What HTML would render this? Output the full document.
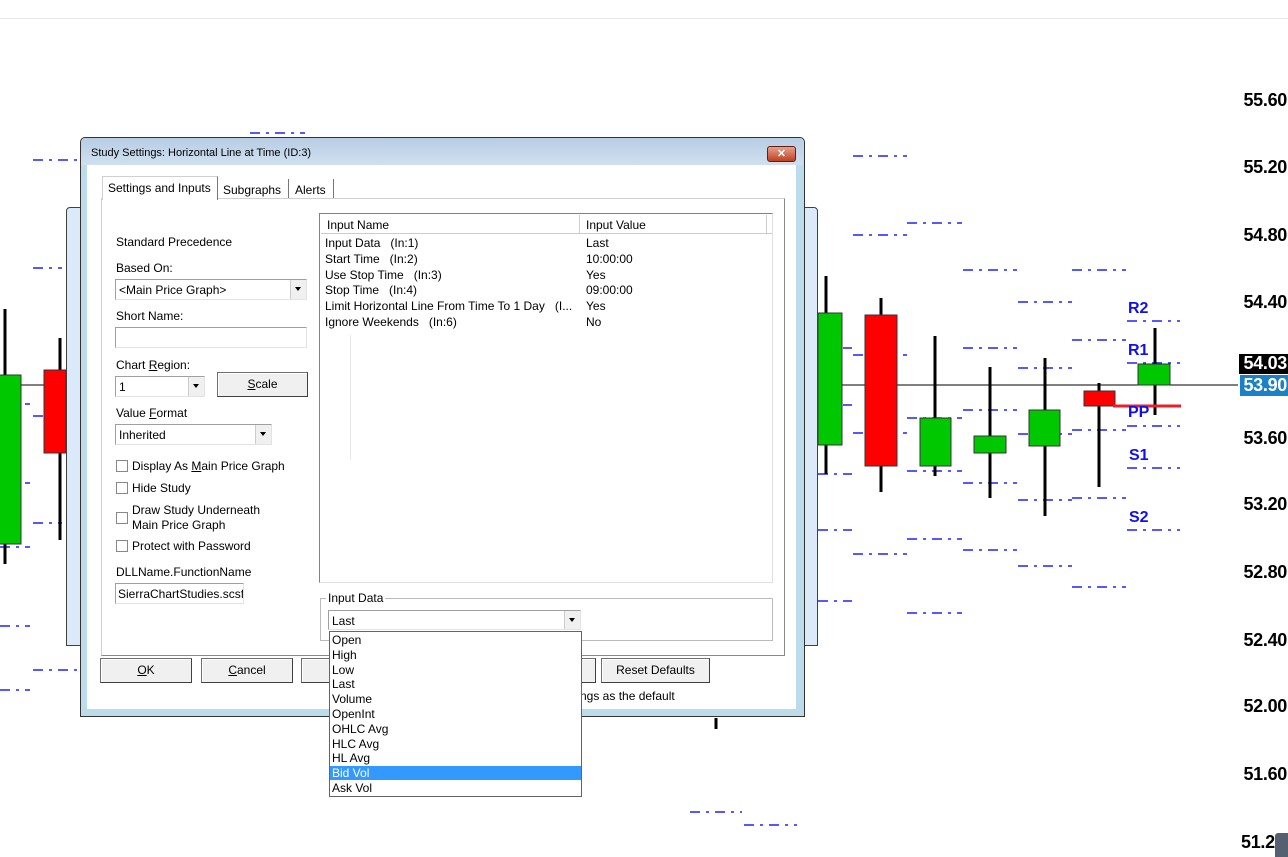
<!DOCTYPE html>
<html><head><meta charset="utf-8"><style>
body{margin:0;width:1288px;height:857px;overflow:hidden;background:#fff;font-family:"Liberation Sans",sans-serif;font-size:12px;color:#000;position:relative}
.a{position:absolute}
.lab{position:absolute;right:1px;font-weight:bold;font-size:18px;font-family:"Liberation Sans",sans-serif;letter-spacing:-0.3px}
.pv{position:absolute;font-weight:bold;font-size:16px;color:#1010ee;font-family:"Liberation Sans",sans-serif}
.t{position:absolute;white-space:nowrap}
.box{position:absolute;background:#fff;border:1px solid #a0a0a0;border-right-color:#e3e3e3;border-bottom-color:#e3e3e3}
.dd{position:absolute;right:0;top:0;bottom:0;width:15px;background:#f0f0f0;border-left:1px solid #ccc}
.dd:after{content:"";position:absolute;left:4px;top:7px;border:3px solid transparent;border-top:4px solid #000}
.btn{position:absolute;background:#f0f0f0;border:1px solid #707070;border-right-color:#404040;border-bottom-color:#404040;box-shadow:inset 1px 1px #fff;text-align:center;line-height:23px;height:23px}
.cb{position:absolute;width:10px;height:10px;border:1px solid #888;background:#fff}
</style></head><body>
<div class="a" style="left:0;top:18px;width:1288px;height:1px;background:#e8e8e8"></div>
<svg class="a" style="left:0;top:0" width="1288" height="857">
<g stroke="#2020ff" stroke-width="1.5" stroke-dasharray="10,6,3,6">
<line x1="250" y1="133" x2="305" y2="133"/><line x1="33" y1="160" x2="80" y2="160"/>
<line x1="853" y1="156" x2="907" y2="156"/><line x1="907" y1="223" x2="962" y2="223"/>
<line x1="853" y1="235" x2="907" y2="235"/><line x1="963" y1="270" x2="1017" y2="270"/>
<line x1="1072" y1="270" x2="1126" y2="270"/><line x1="33" y1="268" x2="62" y2="268"/>
<line x1="1018" y1="302" x2="1072" y2="302"/><line x1="1072" y1="340" x2="1126" y2="340"/>
<line x1="818" y1="348" x2="852" y2="348"/><line x1="853" y1="355" x2="907" y2="355"/>
<line x1="963" y1="348" x2="1017" y2="348"/><line x1="1018" y1="368" x2="1072" y2="368"/>
<line x1="0" y1="404" x2="30" y2="404"/><line x1="33" y1="416" x2="62" y2="416"/>
<line x1="907" y1="418" x2="962" y2="418"/><line x1="963" y1="410" x2="1017" y2="410"/>
<line x1="818" y1="405" x2="852" y2="405"/><line x1="853" y1="433" x2="907" y2="433"/>
<line x1="1072" y1="430" x2="1126" y2="430"/><line x1="1018" y1="434" x2="1072" y2="434"/>
<line x1="963" y1="483" x2="1017" y2="483"/><line x1="818" y1="474" x2="852" y2="474"/>
<line x1="907" y1="471" x2="962" y2="471"/><line x1="0" y1="483" x2="30" y2="483"/>
<line x1="33" y1="523" x2="62" y2="523"/><line x1="0" y1="547" x2="30" y2="547"/>
<line x1="1018" y1="500" x2="1072" y2="500"/><line x1="1072" y1="498" x2="1126" y2="498"/>
<line x1="818" y1="530" x2="852" y2="530"/><line x1="853" y1="554" x2="907" y2="554"/>
<line x1="907" y1="539" x2="962" y2="539"/><line x1="963" y1="550" x2="1017" y2="550"/>
<line x1="1018" y1="566" x2="1072" y2="566"/><line x1="1072" y1="587" x2="1126" y2="587"/>
<line x1="818" y1="601" x2="852" y2="601"/><line x1="907" y1="613" x2="962" y2="613"/>
<line x1="0" y1="626" x2="30" y2="626"/><line x1="33" y1="670" x2="80" y2="670"/>
<line x1="0" y1="690" x2="30" y2="690"/><line x1="690" y1="812" x2="742" y2="812"/>
<line x1="744" y1="825" x2="797" y2="825"/>
<line x1="1127" y1="321" x2="1180" y2="321"/><line x1="1127" y1="363" x2="1180" y2="363"/>
<line x1="1127" y1="426" x2="1180" y2="426"/><line x1="1127" y1="468" x2="1180" y2="468"/>
<line x1="1127" y1="530" x2="1180" y2="530"/>
</g>
<line x1="0" y1="385" x2="1238" y2="385" stroke="#000" stroke-width="1"/>
<g stroke="#000" stroke-width="3">
<line x1="5" y1="309" x2="5" y2="564"/><line x1="60" y1="338" x2="60" y2="540"/>
<line x1="826" y1="276" x2="826" y2="474"/><line x1="881" y1="298" x2="881" y2="492"/>
<line x1="935" y1="336" x2="935" y2="476"/><line x1="990" y1="367" x2="990" y2="498"/>
<line x1="1045" y1="358" x2="1045" y2="516"/><line x1="1099" y1="383" x2="1099" y2="487"/>
<line x1="1155" y1="328" x2="1155" y2="415"/><line x1="716" y1="718" x2="716" y2="729"/>
</g>
<g stroke="#333" stroke-width="1">
<rect x="-1" y="375" width="22" height="169" fill="#00c800"/>
<rect x="44" y="370" width="22" height="83" fill="#ff0000"/>
<rect x="818" y="313" width="24" height="132" fill="#00c800"/>
<rect x="865" y="315" width="32" height="151" fill="#ff0000"/>
<rect x="920" y="418" width="31" height="48" fill="#00c800"/>
<rect x="974" y="436" width="32" height="17" fill="#00c800"/>
<rect x="1029" y="410" width="31" height="36" fill="#00c800"/>
<rect x="1084" y="391" width="31" height="15" fill="#ff0000"/>
<rect x="1138" y="364" width="32" height="21" fill="#00c800"/>
</g>
<line x1="1113" y1="406" x2="1181" y2="406" stroke="#e8202a" stroke-width="3"/>
</svg>
<div class="pv" style="left:1128px;top:300px">R2</div>
<div class="pv" style="left:1128px;top:342px">R1</div>
<div class="pv" style="left:1128px;top:404px">PP</div>
<div class="pv" style="left:1129px;top:447px">S1</div>
<div class="pv" style="left:1129px;top:509px">S2</div>
<div class="lab" style="top:90px">55.60</div>
<div class="lab" style="top:157px">55.20</div>
<div class="lab" style="top:225px">54.80</div>
<div class="lab" style="top:292px">54.40</div>
<div class="a" style="left:1239px;top:354px;width:49px;height:20px;background:#000"></div>
<div class="lab" style="top:353px;color:#fff">54.03</div>
<div class="a" style="left:1240px;top:375px;width:48px;height:21px;background:#1a80c8"></div>
<div class="lab" style="top:375px;color:#fff">53.90</div>
<div class="lab" style="top:428px">53.60</div>
<div class="lab" style="top:494px">53.20</div>
<div class="lab" style="top:562px">52.80</div>
<div class="lab" style="top:630px">52.40</div>
<div class="lab" style="top:696px">52.00</div>
<div class="lab" style="top:764px">51.60</div>
<div class="lab" style="top:832px;right:auto;left:1241px">51.2</div>
<div class="a" style="left:1275px;top:833px;width:13px;height:24px;background:#556070;border-radius:3px 0 0 0"></div>

<div class="a" style="left:66px;top:207px;width:750px;height:437px;border:1px solid #404040;background:#dbeaf8;border-radius:4px 4px 0 0"></div>
<div class="a" style="left:80px;top:137px;width:723px;height:578px;border:1px solid #333;border-radius:5px 5px 0 0;background:#bcdcec"></div>
<div class="a" style="left:81px;top:138px;width:722px;height:27px;background:linear-gradient(#b8cde4,#cfe0f0);border-radius:5px 5px 0 0"></div>
<div class="t" style="left:91px;top:147px;font-size:11px">Study Settings: Horizontal Line at Time (ID:3)</div>
<div class="a" style="left:767px;top:146px;width:27px;height:14px;background:linear-gradient(#e8a090,#c04020);border:1px solid #602010;border-radius:3px;color:#fff;font-weight:bold;text-align:center;font-size:11px;line-height:14px">✕</div>
<div class="a" style="left:87px;top:165px;width:709px;height:544px;background:#fff"></div>
<div class="a" style="left:101px;top:198px;width:682px;height:456px;border:1px solid #8a8a8a;border-top-color:#d0d0d0;border-left-color:#d0d0d0;background:#fff"></div>
<div class="a" style="left:102px;top:176px;width:114px;height:23px;background:#fff;border:1px solid #d0d0d0;border-bottom:none;border-right:1px solid #777"></div>
<div class="t" style="left:108px;top:181px">Settings and Inputs</div>
<div class="a" style="left:218px;top:179px;width:70px;height:19px;border-right:1px solid #777"></div>
<div class="t" style="left:223px;top:183px">Subgraphs</div>
<div class="a" style="left:290px;top:179px;width:43px;height:19px;border-right:1px solid #777"></div>
<div class="t" style="left:295px;top:183px">Alerts</div>

<div class="t" style="left:116px;top:235px">Standard Precedence</div>
<div class="t" style="left:116px;top:261px">Based On:</div>
<div class="box" style="left:115px;top:279px;width:190px;height:19px"><div class="t" style="left:3px;top:3px">&lt;Main Price Graph&gt;</div><div class="dd"></div></div>
<div class="t" style="left:116px;top:309px">Short Name:</div>
<div class="box" style="left:115px;top:327px;width:190px;height:19px"></div>
<div class="t" style="left:116px;top:358px">Chart <u>R</u>egion:</div>
<div class="box" style="left:115px;top:376px;width:88px;height:19px"><div class="t" style="left:3px;top:3px">1</div><div class="dd"></div></div>
<div class="btn" style="left:217px;top:372px;width:89px"><u>S</u>cale</div>
<div class="t" style="left:116px;top:406px">Value <u>F</u>ormat</div>
<div class="box" style="left:115px;top:424px;width:155px;height:19px"><div class="t" style="left:3px;top:3px">Inherited</div><div class="dd"></div></div>
<div class="cb" style="left:116px;top:460px"></div><div class="t" style="left:132px;top:459px">Display As <u>M</u>ain Price Graph</div>
<div class="cb" style="left:116px;top:482px"></div><div class="t" style="left:132px;top:481px">Hide Study</div>
<div class="cb" style="left:116px;top:512px"></div><div class="t" style="left:132px;top:503px;line-height:15px">Draw Study Underneath<br>Main Price Graph</div>
<div class="cb" style="left:116px;top:540px"></div><div class="t" style="left:132px;top:539px">Protect with Password</div>
<div class="t" style="left:116px;top:565px">DLLName.FunctionName</div>
<div class="box" style="left:115px;top:583px;width:127px;height:19px;overflow:hidden"><div class="t" style="left:2px;top:3px">SierraChartStudies.scsf</div></div>

<div class="a" style="left:319px;top:213px;width:452px;height:368px;border:1px solid #828282;border-right-color:#e0e0e0;border-bottom-color:#e0e0e0;background:#fff"></div>
<div class="a" style="left:321px;top:215px;width:451px;height:18px;border-bottom:1px solid #ccc"></div>
<div class="a" style="left:579px;top:215px;width:1px;height:18px;background:#ccc"></div>
<div class="a" style="left:766px;top:215px;width:1px;height:18px;background:#ccc"></div>
<div class="t" style="left:327px;top:218px">Input Name</div>
<div class="t" style="left:586px;top:218px">Input Value</div>
<div class="a" style="left:350px;top:335px;width:1px;height:125px;background:#e8e8e8"></div>
<div class="t" style="left:325px;top:236px;line-height:15.8px">Input Data&nbsp;&nbsp;&nbsp;(In:1)<br>Start Time&nbsp;&nbsp;&nbsp;(In:2)<br>Use Stop Time&nbsp;&nbsp;&nbsp;(In:3)<br>Stop Time&nbsp;&nbsp;&nbsp;(In:4)<br>Limit Horizontal Line From Time To 1 Day&nbsp;&nbsp;&nbsp;(I...<br>Ignore Weekends&nbsp;&nbsp;&nbsp;(In:6)</div>
<div class="t" style="left:586px;top:236px;line-height:15.8px">Last<br>10:00:00<br>Yes<br>09:00:00<br>Yes<br>No</div>

<div class="a" style="left:320px;top:598px;width:451px;height:41px;border:1px solid #bbb"></div>
<div class="t" style="left:326px;top:591px;background:#fff;padding:0 2px">Input Data</div>
<div class="box" style="left:328px;top:610px;width:251px;height:18px"><div class="t" style="left:3px;top:3px">Last</div><div class="dd"></div></div>

<div class="btn" style="left:100px;top:658px;width:90px"><u>O</u>K</div>
<div class="btn" style="left:201px;top:658px;width:90px"><u>C</u>ancel</div>
<div class="btn" style="left:301px;top:658px;width:90px"></div>
<div class="btn" style="left:500px;top:658px;width:94px"></div>
<div class="btn" style="left:601px;top:658px;width:107px">Reset Defaults</div>
<div class="t" style="left:580px;top:689px">ngs as the default</div>

<div class="a" style="left:329px;top:631px;width:251px;height:164px;border:1px solid #646464;background:#fff"></div>
<div class="a" style="left:330px;top:766px;width:251px;height:14px;background:#3399ff"></div>
<div class="t" style="left:332px;top:633px;line-height:14.8px">Open<br>High<br>Low<br>Last<br>Volume<br>OpenInt<br>OHLC Avg<br>HLC Avg<br>HL Avg<br><span style="color:#fff">Bid Vol</span><br>Ask Vol</div>
</body></html>
